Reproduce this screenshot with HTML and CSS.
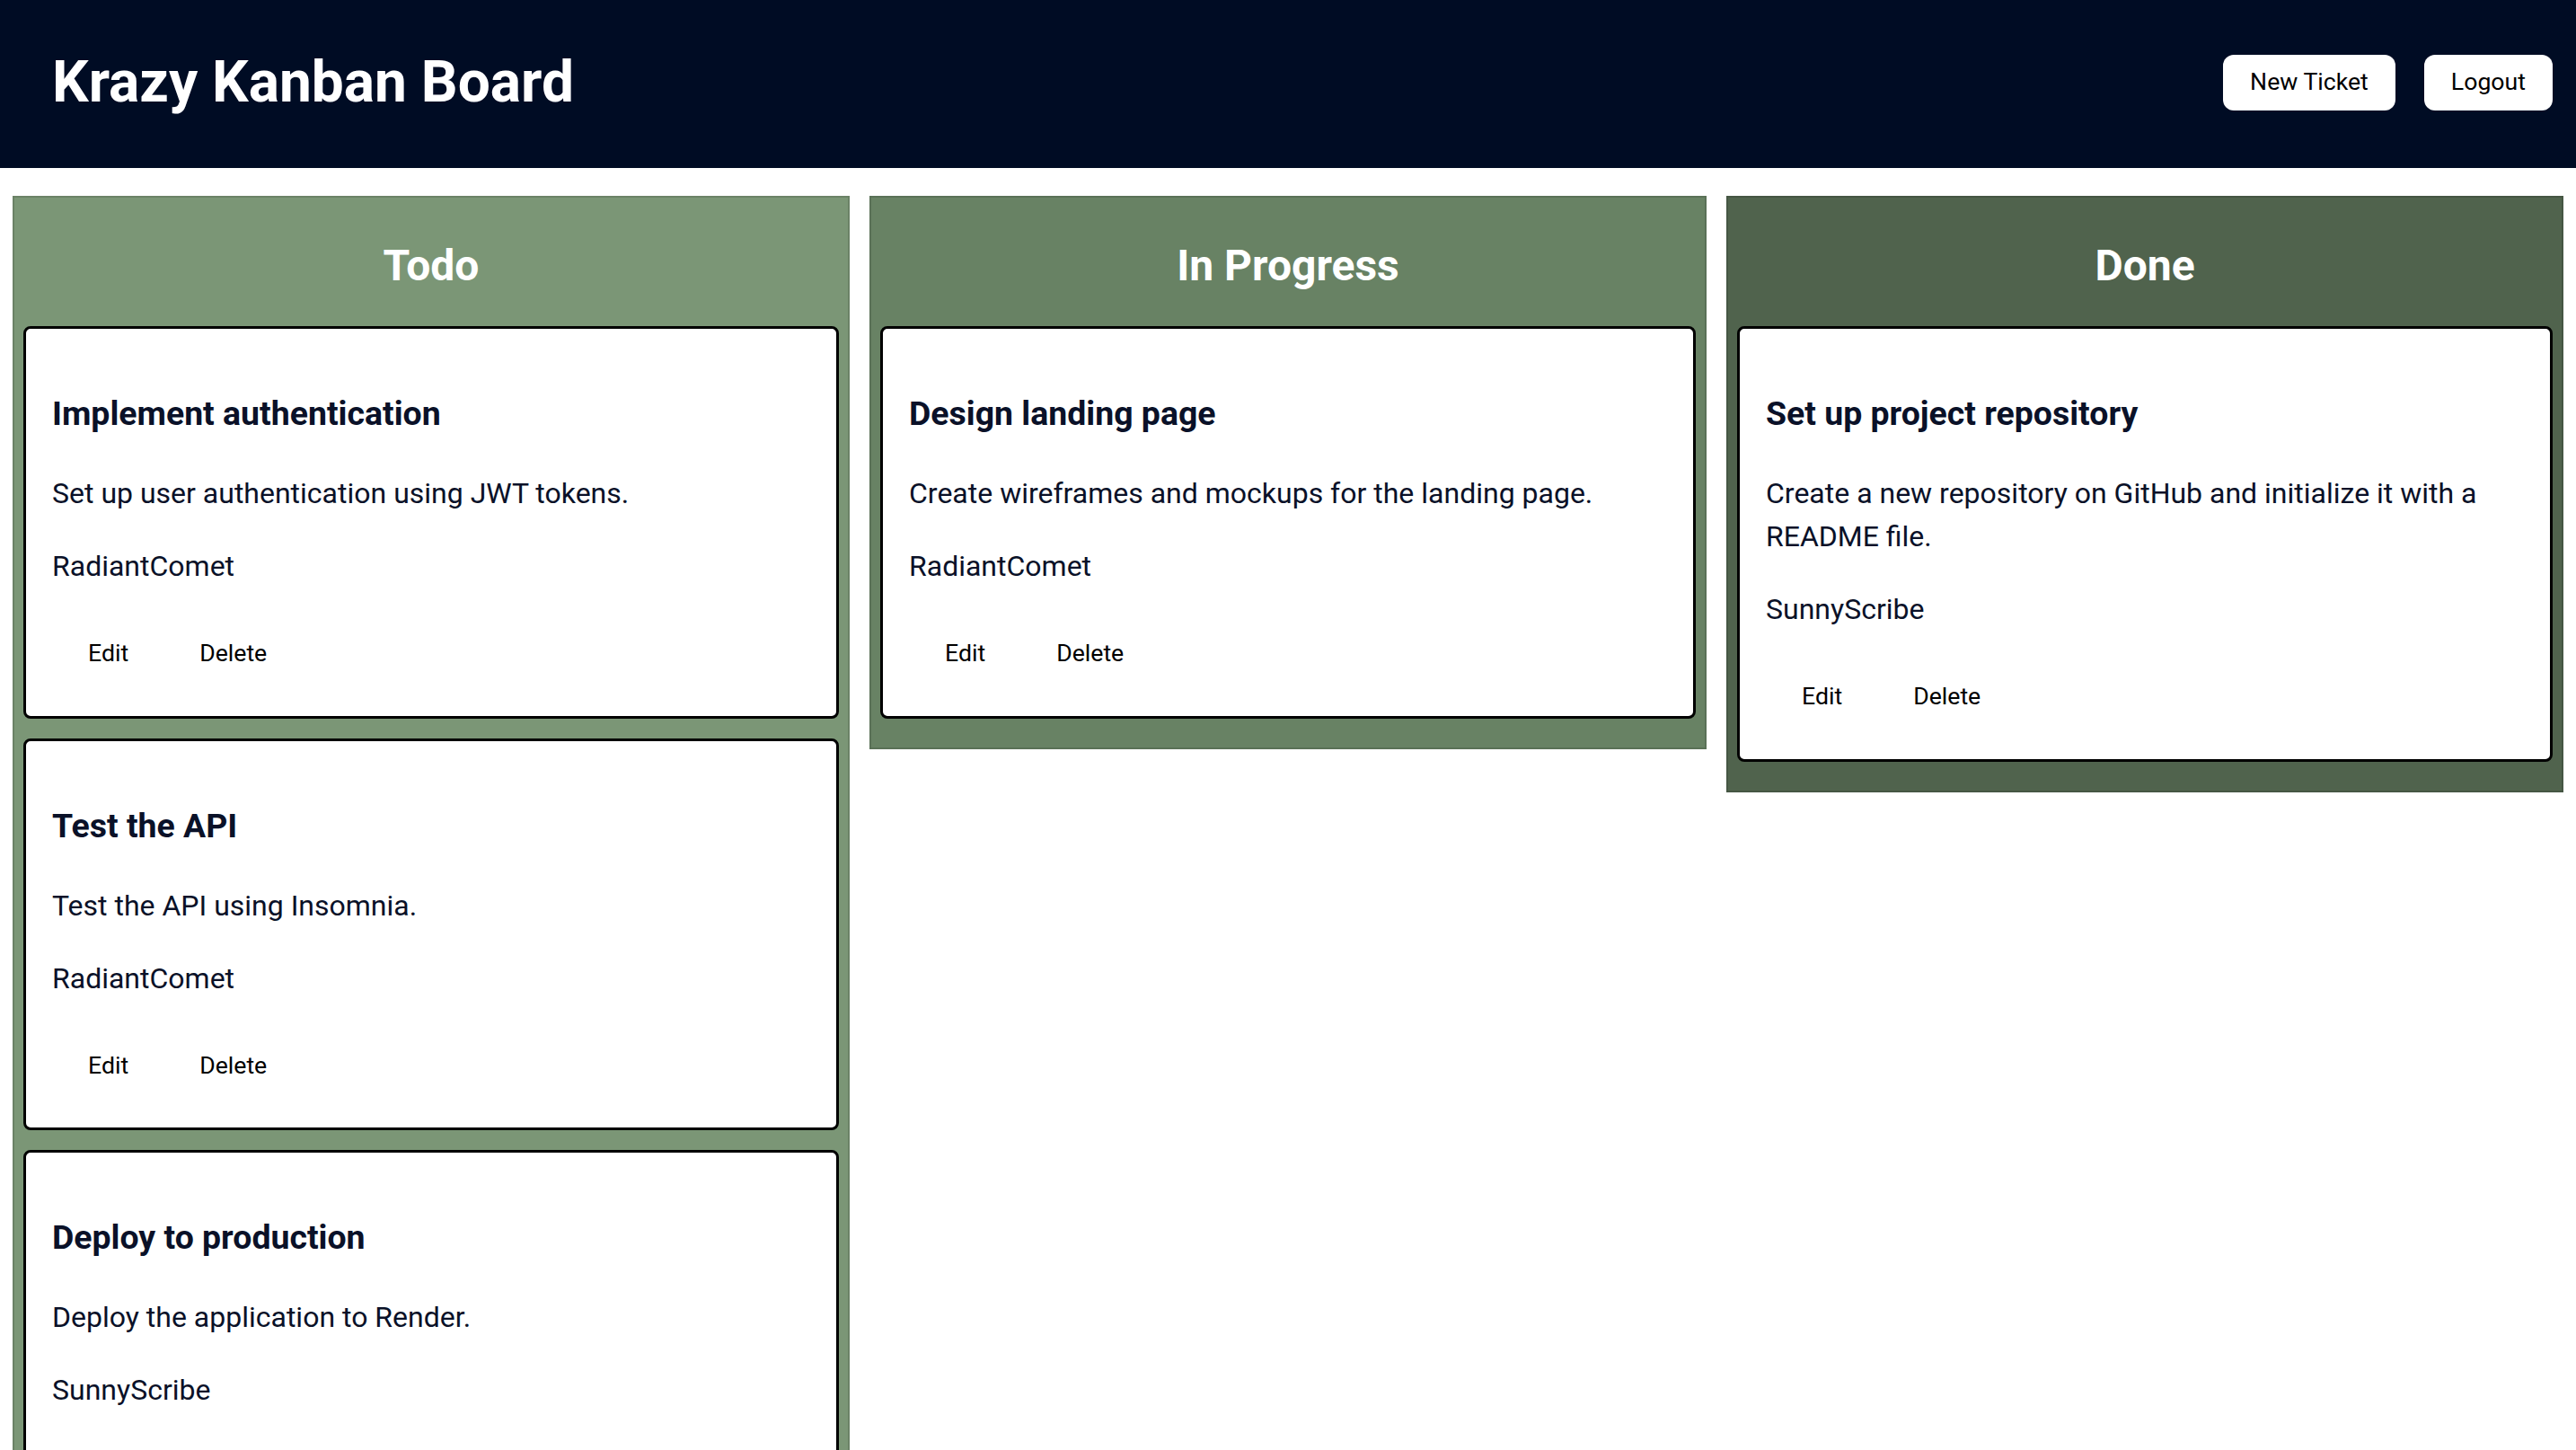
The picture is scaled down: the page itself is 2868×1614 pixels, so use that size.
FILE: index.html
```html
<!DOCTYPE html>
<html lang="en">
<head>
<meta charset="utf-8">
<title>Krazy Kanban Board</title>
<link rel="stylesheet" href="styles.css">
</head>
<body>
<header class="topbar">
  <h1 class="brand">Krazy Kanban Board</h1>
  <nav class="actions">
    <button class="nav-btn">New Ticket</button>
    <button class="nav-btn">Logout</button>
  </nav>
</header>
<main class="board">
  <section class="column col-todo">
    <h2 class="column-title">Todo</h2>
    <div class="cards">
      <article class="card">
        <h3 class="card-title">Implement authentication</h3>
        <p class="card-text">Set up user authentication using JWT tokens.</p>
        <p class="card-text">RadiantComet</p>
        <div class="card-actions"><button class="card-btn">Edit</button><button class="card-btn">Delete</button></div>
      </article>
      <article class="card">
        <h3 class="card-title">Test the API</h3>
        <p class="card-text">Test the API using Insomnia.</p>
        <p class="card-text">RadiantComet</p>
        <div class="card-actions"><button class="card-btn">Edit</button><button class="card-btn">Delete</button></div>
      </article>
      <article class="card">
        <h3 class="card-title">Deploy to production</h3>
        <p class="card-text">Deploy the application to Render.</p>
        <p class="card-text">SunnyScribe</p>
        <div class="card-actions"><button class="card-btn">Edit</button><button class="card-btn">Delete</button></div>
      </article>
    </div>
  </section>
  <section class="column col-progress">
    <h2 class="column-title">In Progress</h2>
    <div class="cards">
      <article class="card">
        <h3 class="card-title">Design landing page</h3>
        <p class="card-text">Create wireframes and mockups for the landing page.</p>
        <p class="card-text">RadiantComet</p>
        <div class="card-actions"><button class="card-btn">Edit</button><button class="card-btn">Delete</button></div>
      </article>
    </div>
  </section>
  <section class="column col-done">
    <h2 class="column-title">Done</h2>
    <div class="cards">
      <article class="card">
        <h3 class="card-title">Set up project repository</h3>
        <p class="card-text">Create a new repository on GitHub and initialize it with a README file.</p>
        <p class="card-text">SunnyScribe</p>
        <div class="card-actions"><button class="card-btn">Edit</button><button class="card-btn">Delete</button></div>
      </article>
    </div>
  </section>
</main>
</body>
</html>
```
FILE: styles.css
```css
* { box-sizing: border-box; }

html, body {
  margin: 0;
  padding: 0;
  background: #ffffff;
  font-family: Roboto, "Liberation Sans", Arial, sans-serif;
  font-size: 32px;
  line-height: 1.5;
  color: #0a1128;
}

.topbar {
  height: 187px;
  background: #000c24;
  display: flex;
  align-items: center;
  justify-content: space-between;
  padding: 0 26px 4px 58px;
}

.brand {
  margin: 0;
  font-size: 64px;
  font-weight: 700;
  line-height: 1.172;
  color: #ffffff;
}

.actions {
  display: flex;
  gap: 32px;
}

.nav-btn {
  font-family: Roboto, "Liberation Sans", Arial, sans-serif;
  font-size: 26.67px;
  line-height: 1.172;
  color: #000000;
  background: #ffffff;
  border: none;
  border-radius: 12px;
  padding: 15px 30px;
  height: 62px;
}

.board {
  display: grid;
  grid-template-columns: repeat(3, 1fr);
  gap: 22px;
  padding: 0 14px;
  margin-top: 31px;
  align-items: start;
}

.column {
  border: 2px solid rgba(0, 0, 0, 0.13);
  padding: 0 10px 32px;
}

.col-todo { background: #7b9676; }
.col-progress { background: #688264; }
.col-done { background: #50634d; }

.column-title {
  margin: 48px 0 39px;
  font-size: 48px;
  font-weight: 700;
  line-height: 1.172;
  text-align: center;
  color: #ffffff;
}

.cards {
  display: flex;
  flex-direction: column;
  gap: 22px;
}

.card {
  background: #ffffff;
  border: 3px solid #000000;
  border-radius: 8px;
  padding: 29px;
}

.card-title {
  margin: 37px 0;
  font-size: 37.44px;
  font-weight: 700;
  line-height: 1.5;
  color: #0a1128;
}

.card-text {
  margin: 33px 0;
  font-size: 32px;
  line-height: 1.5;
  color: #0a1128;
}

.card-actions {
  display: flex;
}

.card-btn {
  font-family: Roboto, "Liberation Sans", Arial, sans-serif;
  font-size: 26.67px;
  line-height: 1.172;
  color: #000000;
  background: transparent;
  border: none;
  margin: 12px 11px 11px 12px;
  padding: 13px 28px;
}
```
